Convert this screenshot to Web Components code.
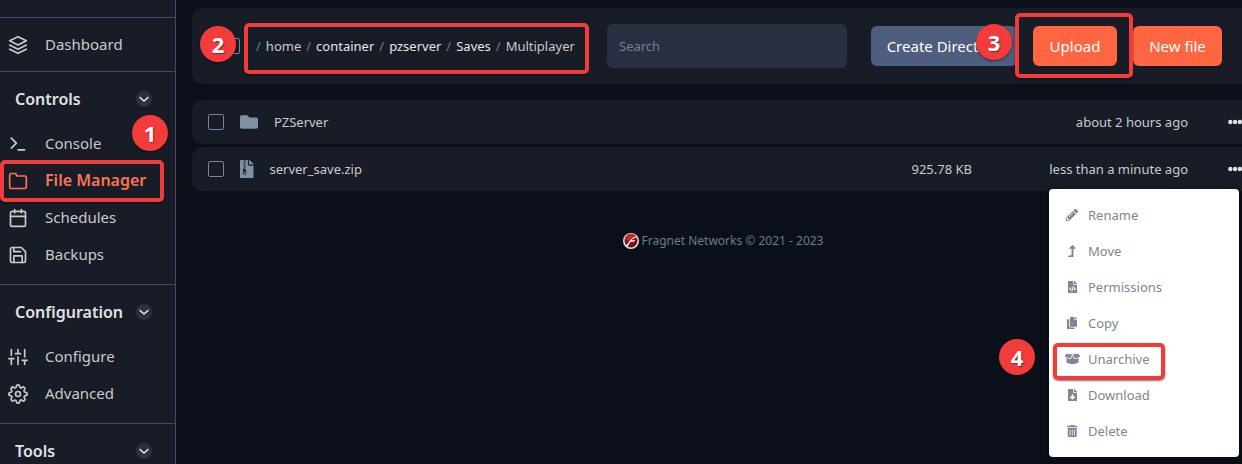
<!DOCTYPE html>
<html lang="en">
<head>
<meta charset="utf-8">
<meta name="viewport" content="width=device-width, initial-scale=1">
<title>File Manager</title>
<style>
  html { background: #0b0f19; }
  body {
    --panel: #171c27;
    --line: #4a4a68;
    --text: #cacaca;
    --muted: #7b8794;
    --orange: #fe6642;
    --mark: #f23b3b;
    margin: 0;
    background: #0b0f19;
    color: var(--text);
    font-family: "Noto Sans", "Open Sans", sans-serif;
    font-size: 13px;
    line-height: 20px;
  }
</style>
</head>
<body>
<app-shell>
  <side-nav slot="nav">
    <nav-section>
      <nav-item icon="layers">Dashboard</nav-item>
    </nav-section>
    <nav-section heading="Controls">
      <nav-item icon="terminal">Console</nav-item>
      <nav-item icon="folderLine" active>File Manager
        <call-out slot="mark" number="1" style="--box: -2px 11px -3px 0; --badge-x: 132px; --badge-y: -47px"></call-out>
      </nav-item>
      <nav-item icon="calendar">Schedules</nav-item>
      <nav-item icon="save">Backups</nav-item>
    </nav-section>
    <nav-section heading="Configuration">
      <nav-item icon="sliders">Configure</nav-item>
      <nav-item icon="settings">Advanced</nav-item>
    </nav-section>
    <nav-section heading="Tools"></nav-section>
  </side-nav>

  <file-toolbar></file-toolbar>
  <file-list>
    <file-row name="PZServer" icon="folder" date="about 2 hours ago"></file-row>
    <file-row name="server_save.zip" icon="archive" size="925.78 KB" date="less than a minute ago">
      <action-menu slot="menu">
        <menu-item icon="pencil">Rename</menu-item>
        <menu-item icon="levelUp">Move</menu-item>
        <menu-item icon="code">Permissions</menu-item>
        <menu-item icon="copy">Copy</menu-item>
        <menu-item icon="boxOpen">Unarchive
          <call-out slot="mark" number="4" style="--box: 2px 74px -3px 4px; --badge-x: -50px; --badge-y: -2px"></call-out>
        </menu-item>
        <menu-item icon="download">Download</menu-item>
        <menu-item icon="trash">Delete</menu-item>
      </action-menu>
    </file-row>
  </file-list>
  <page-footer>Fragnet Networks © 2021 - 2023</page-footer>
</app-shell>

<script>
const line = (body) => ({ box: "0 0 24 24", line: true, body });
const solid = (width, d) => ({ box: `0 0 ${width} 512`, body: `<path d="${d}"/>` });

const ICONS = {
  layers: line('<path d="M12 2 2 7l10 5 10-5-10-5z"/><path d="m2 17 10 5 10-5M2 12l10 5 10-5"/>'),
  terminal: line('<path d="m4 17 6-6-6-6M12 19h8"/>'),
  folderLine: line('<path d="M22 19a2 2 0 0 1-2 2H4a2 2 0 0 1-2-2V5a2 2 0 0 1 2-2h5l2 3h9a2 2 0 0 1 2 2z"/>'),
  calendar: line('<rect x="3" y="4" width="18" height="18" rx="2"/><path d="M16 2v4M8 2v4M3 10h18"/>'),
  save: line('<path d="M19 21H5a2 2 0 0 1-2-2V5a2 2 0 0 1 2-2h11l5 5v11a2 2 0 0 1-2 2z"/><path d="M17 21v-8H7v8M7 3v5h8"/>'),
  sliders: line('<path d="M4 21v-7M4 10V3M12 21v-9M12 8V3M20 21v-5M20 12V3M1 14h6M9 8h6M17 16h6"/>'),
  settings: line('<circle cx="12" cy="12" r="3"/><path d="M19.4 15a1.65 1.65 0 0 0 .33 1.82l.06.06a2 2 0 0 1-2.83 2.83l-.06-.06a1.65 1.65 0 0 0-2.8 1.18V21a2 2 0 0 1-4 0v-.09A1.65 1.65 0 0 0 9 19.4a1.65 1.65 0 0 0-1.82.33l-.06.06a2 2 0 0 1-2.83-2.83l.06-.06a1.65 1.65 0 0 0-1.18-2.8H3a2 2 0 0 1 0-4h.09A1.65 1.65 0 0 0 4.6 9a1.65 1.65 0 0 0-.33-1.82l-.06-.06a2 2 0 0 1 2.83-2.83l.06.06A1.65 1.65 0 0 0 9 4.6a1.65 1.65 0 0 0 1-1.51V3a2 2 0 0 1 4 0v.09a1.65 1.65 0 0 0 2.8 1.18l.06-.06a2 2 0 0 1 2.83 2.83l-.06.06A1.65 1.65 0 0 0 19.4 9c.26.6.85 1 1.51 1H21a2 2 0 0 1 0 4h-.09a1.65 1.65 0 0 0-1.51 1z"/>'),
  chevron: line('<path d="m4 9 8 7 8-7"/>'),
  folder: solid(512, "M464 128H272l-64-64H48C21.49 64 0 85.49 0 112v288c0 26.51 21.49 48 48 48h416c26.51 0 48-21.49 48-48V176c0-26.51-21.49-48-48-48z"),
  archive: solid(384, "M377 105L279.1 7c-4.5-4.5-10.6-7-17-7H256v128h128v-6.1c0-6.3-2.5-12.4-7-16.9zM128.4 336c-17.9 0-32.4 12.1-32.4 27 0 15 14.6 27 32.5 27s32.4-12.1 32.4-27-14.6-27-32.5-27zM224 136V0h-63.6v32h-32V0H24C10.7 0 0 10.7 0 24v464c0 13.3 10.7 24 24 24h336c13.3 0 24-10.7 24-24V160H248c-13.2 0-24-10.8-24-24zM95.9 32h32v32h-32zm32.3 384c-33.2 0-58-30.4-51.4-62.9L96.4 256v-32h32v-32h-32v-32h32v-32h-32V96h32V64h32v32h-32v32h32v32h-32v32h32v32h-32v32h22.1c5.7 0 10.7 4.1 11.8 9.7l17.3 87.7c6.4 32.4-18.4 62.6-51.4 62.6z"),
  dots: { box: "0 0 14 14", body: '<circle cx="2.3" cy="7" r="2.2"/><circle cx="7.1" cy="7" r="2.2"/><circle cx="11.9" cy="7" r="2.2"/>' },
  pencil: solid(512, "M497.9 142.1l-46.1 46.1c-4.7 4.7-12.3 4.7-17 0l-111-111c-4.7-4.7-4.7-12.3 0-17l46.1-46.1c18.7-18.7 49.1-18.7 67.9 0l60.1 60.1c18.8 18.7 18.8 49.1 0 67.9zM284.2 99.8L21.6 362.4.4 483.9c-2.9 16.4 11.4 30.6 27.8 27.8l121.5-21.3 262.6-262.6c4.7-4.7 4.7-12.3 0-17l-111-111c-4.8-4.7-12.4-4.7-17.1 0zM124.1 339.9c-5.5-5.5-5.5-14.3 0-19.8l154-154c5.5-5.5 14.3-5.5 19.8 0s5.5 14.3 0 19.8l-154 154c-5.5 5.5-14.3 5.5-19.8 0zM88 424h48v36.3l-64.5 11.3-31.1-31.1L51.7 376H88v48z"),
  levelUp: solid(320, "M313.553 119.669L209.587 7.666c-9.485-10.214-25.676-10.229-35.174 0L70.438 119.669C56.232 134.969 67.062 160 88.025 160H152v272H68.024a11.996 11.996 0 0 0-8.485 3.515l-56 56C-4.021 499.074 1.333 512 12.024 512H208c13.255 0 24-10.745 24-24V160h63.966c20.878 0 31.851-24.969 17.587-40.331z"),
  code: solid(384, "M384 121.941V128H256V0h6.059c6.365 0 12.47 2.529 16.971 7.029l97.941 97.941A24.005 24.005 0 0 1 384 121.941zM248 160c-13.2 0-24-10.8-24-24V0H24C10.745 0 0 10.745 0 24v464c0 13.255 10.745 24 24 24h336c13.255 0 24-10.745 24-24V160H248zM123.206 400.505a5.4 5.4 0 0 1-7.633.246l-64.866-60.812a5.4 5.4 0 0 1 0-7.879l64.866-60.812a5.4 5.4 0 0 1 7.633.246l19.579 20.885a5.4 5.4 0 0 1-.372 7.747L101.65 336l40.763 35.874a5.4 5.4 0 0 1 .372 7.747l-19.579 20.884zm51.295 50.479l-27.453-7.97a5.402 5.402 0 0 1-3.681-6.692l61.44-211.626a5.402 5.402 0 0 1 6.692-3.681l27.452 7.97a5.4 5.4 0 0 1 3.68 6.692l-61.44 211.626a5.397 5.397 0 0 1-6.69 3.681zm160.792-111.045l-64.866 60.812a5.4 5.4 0 0 1-7.633-.246l-19.58-20.885a5.4 5.4 0 0 1 .372-7.747L284.35 336l-40.763-35.874a5.4 5.4 0 0 1-.372-7.747l19.58-20.885a5.4 5.4 0 0 1 7.633-.246l64.866 60.812a5.4 5.4 0 0 1-.001 7.879z"),
  copy: solid(448, "M320 448v40c0 13.255-10.745 24-24 24H24c-13.255 0-24-10.745-24-24V120c0-13.255 10.745-24 24-24h72v296c0 30.879 25.121 56 56 56h168zm0-344V0H152c-13.255 0-24 10.745-24 24v368c0 13.255 10.745 24 24 24h272c13.255 0 24-10.745 24-24V128H344c-13.2 0-24-10.8-24-24zm120.971-31.029L375.029 7.029A24 24 0 0 0 358.059 0H352v96h96v-6.059a24 24 0 0 0-7.029-16.97z"),
  boxOpen: solid(640, "M425.7 256c-16.9 0-32.8-9-41.4-23.4L320 126l-64.2 106.6c-8.7 14.5-24.6 23.5-41.5 23.5-4.5 0-9-.6-13.3-1.9L64 215v178c0 14.7 10 27.5 24.2 31l216.2 54.1c10.2 2.5 20.9 2.5 31 0L551.8 424c14.2-3.6 24.2-16.4 24.2-31V215l-137 39.1c-4.3 1.3-8.8 1.9-13.3 1.9zm212.6-112.2L586.8 41c-3.1-6.2-9.8-9.8-16.7-8.9L320 64l91.7 152.1c3.8 6.3 11.4 9.3 18.5 7.3l197.9-56.5c9.9-2.9 14.7-13.9 10.2-23.1zM53.2 41L1.7 143.8c-4.6 9.2.3 20.2 10.1 23l197.9 56.5c7.1 2 14.7-1 18.5-7.3L320 64 69.8 32.1c-6.9-.8-13.5 2.7-16.6 8.9z"),
  download: solid(384, "M224 136V0H24C10.7 0 0 10.7 0 24v464c0 13.3 10.7 24 24 24h336c13.3 0 24-10.7 24-24V160H248c-13.2 0-24-10.8-24-24zm76.45 211.36l-96.42 95.7c-6.65 6.61-17.39 6.61-24.04 0l-96.42-95.7C73.42 337.29 80.54 320 94.82 320H160v-80c0-8.84 7.16-16 16-16h32c8.84 0 16 7.16 16 16v80h65.18c14.28 0 21.4 17.29 11.27 27.36zM377 105L279.1 7c-4.5-4.5-10.6-7-17-7H256v128h128v-6.1c0-6.3-2.5-12.4-7-16.9z"),
  trash: solid(448, "M32 464a48 48 0 0 0 48 48h288a48 48 0 0 0 48-48V128H32zm272-256a16 16 0 0 1 32 0v224a16 16 0 0 1-32 0zm-96 0a16 16 0 0 1 32 0v224a16 16 0 0 1-32 0zm-96 0a16 16 0 0 1 32 0v224a16 16 0 0 1-32 0zM432 32H312l-9.4-18.7A24 24 0 0 0 281.1 0H166.8a23.72 23.72 0 0 0-21.4 13.3L136 32H16A16 16 0 0 0 0 48v32a16 16 0 0 0 16 16h416a16 16 0 0 0 16-16V48a16 16 0 0 0-16-16z"),
  brand: { box: "0 0 16 16", body: '<circle cx="8" cy="8" r="8" fill="#d9dcdf"/><circle cx="8" cy="8" r="6.4" fill="#7d1014"/><path d="M2 6a6.2 6.2 0 0 1 12-1L4 8z" fill="#c9252a"/><path d="M3 12.6C6 10 7 4.6 13.8 3.2L12.6 5C10.2 5.4 9.3 6 8.5 7.2h3.800l-1.200 1.600H7.500C6.500 10.800 5.400 12.600 3.800 13.600z" fill="#fff"/>' }
};

/* Base class: fills an open shadow root from view() once attributes are available. */
class View extends HTMLElement {
  connectedCallback() {
    if (this.shadowRoot) return;
    this.attachShadow({ mode: "open" }).innerHTML =
      `<style>*{box-sizing:border-box}${this.css()}</style>${this.view()}`;
  }
  attr(name) { return this.getAttribute(name) || ""; }
}

class UiIcon extends View {
  css() { return `:host{display:inline-flex;flex:none;height:var(--icon-size,20px)}
    svg{display:block;height:100%;width:auto;fill:currentColor}
    svg.line{fill:none;stroke:currentColor;stroke-width:var(--icon-stroke,2);stroke-linecap:round;stroke-linejoin:round}`; }
  view() {
    const i = ICONS[this.attr("name")];
    return `<svg viewBox="${i.box}" class="${i.line ? "line" : ""}" aria-hidden="true">${i.body}</svg>`;
  }
}

class AppShell extends View {
  css() { return `:host{display:grid;grid-template-columns:176px minmax(0,1fr);grid-template-rows:minmax(0,1fr);height:100vh}
    main{padding:8px 0 0 16px;min-width:0}`; }
  view() { return `<slot name="nav"></slot><main><slot></slot></main>`; }
}

class SideNav extends View {
  css() { return `:host{display:block;background:var(--panel);border-right:1px solid var(--line);overflow-x:hidden;overflow-y:auto;scrollbar-width:none}
    nav{padding-top:17px}`; }
  view() { return `<nav aria-label="Server"><slot></slot></nav>`; }
}

class NavSection extends View {
  css() { return `:host{display:block;border-top:1px solid var(--line);padding:8px 0}
    :host([heading]){padding:0 0 11px}
    header{display:flex;align-items:center;justify-content:space-between;height:53px;padding:0 23px 0 15px}
    h2{margin:0;font-size:16px;line-height:24px;font-weight:600;color:#e2e2e2}
    button{display:flex;align-items:center;justify-content:center;width:16px;height:16px;padding:0;border:0;border-radius:50%;background:#2c3044;color:#eee;--icon-size:12px;--icon-stroke:3}`; }
  view() {
    const h = this.attr("heading");
    return (h ? `<header><h2>${h}</h2><button type="button" aria-label="Toggle ${h}"><ui-icon name="chevron"></ui-icon></button></header>` : "") + `<slot></slot>`;
  }
}

class NavItem extends View {
  css() { return `:host{display:block;position:relative}
    a{display:flex;align-items:center;gap:17px;height:37px;padding-left:8px;color:inherit;text-decoration:none;font-size:15px;line-height:25px}
    a span{padding-bottom:1px}
    :host([active]){color:#ff7350}
    :host([active]) a{font-size:16px;font-weight:600}`; }
  view() { return `<a href="#"><ui-icon name="${this.attr("icon")}"></ui-icon><span><slot></slot></span></a><slot name="mark"></slot>`; }
}

/* Numbered tutorial marker: a red frame around its parent plus a round badge. */
class CallOut extends View {
  css() { return `:host{position:absolute;inset:0;pointer-events:none;z-index:2}
    .frame{position:absolute;inset:var(--box);border:4px solid var(--mark);border-radius:5px;box-shadow:0 1px 2px #0008}
    .badge{position:absolute;left:var(--badge-x);top:var(--badge-y);width:36px;height:36px;border-radius:50%;background:var(--mark);color:#fff;
      font:700 22px/36px "Open Sans","Noto Sans",sans-serif;text-align:center;box-shadow:0 1px 2px #0008;text-shadow:1px 1px 1px #0006}`; }
  view() { return `<div class="frame"></div><div class="badge">${this.attr("number")}</div>`; }
}

const checkboxCss = `input[type=checkbox]{appearance:none;flex:none;width:16px;height:16px;margin:0;border:1px solid #76859a;border-radius:2px;background:transparent}`;

class FileToolbar extends View {
  css() { return `:host{display:flex;align-items:center;height:76px;padding:0 20px 0 32px;background:var(--panel);border-radius:10px 0 0 10px}
    ${checkboxCss}
    .path{position:relative;display:flex;gap:5px;flex:1;min-width:0;margin-left:16px;white-space:nowrap}
    .path a{color:#e6e6e6;text-decoration:none}
    .path i{font-style:normal;color:#6c7b8c}
    .search{flex:none;width:240px;height:44px;padding:0 12px;border:0;border-radius:6px;background:#2b2f42;color:var(--text);font:inherit}
    .search::placeholder{color:#738091;opacity:1}
    .actions{display:flex;gap:16px;margin-left:24px}
    .cell{position:relative;display:flex}
    button{height:40px;padding:0;border:0;border-radius:6px;background:var(--orange);color:#fff;font:inherit;font-size:15px;white-space:nowrap}
    .create{width:146px;background:#4f5d7e}.upload{width:84px}.new{width:89px}`; }
  view() { return `<input type="checkbox" aria-label="Select all files">
    <div class="path"><i>/</i><span>home</span><i>/</i><a href="#">container</a><i>/</i><a href="#">pzserver</a><i>/</i><a href="#">Saves</a><i>/</i><span>Multiplayer</span>
      <call-out number="2" style="--box:-13px 18px -18px -12px;--badge-x:-56px;--badge-y:-10px"></call-out></div>
    <input class="search" type="text" placeholder="Search" aria-label="Search">
    <div class="actions"><button class="create" type="button">Create Directory</button>
      <div class="cell"><button class="upload" type="button">Upload</button>
        <call-out number="3" style="--box:-13px -16px -12px -18px;--badge-x:-57px;--badge-y:-2px"></call-out></div>
      <button class="new" type="button">New file</button></div>`; }
}

class FileList extends View {
  css() { return `:host{display:flex;flex-direction:column;gap:3px;margin-top:16px}`; }
  view() { return `<slot></slot>`; }
}

class FileRow extends View {
  css() { return `:host{display:flex;align-items:center;position:relative;height:44px;padding-left:16px;background:var(--panel);border-radius:10px 0 0 10px}
    ${checkboxCss}
    .type{margin:0 16px;color:#8090a0;--icon-size:18px}
    a{flex:1;color:inherit;text-decoration:none}
    .date{width:216px;text-align:right}
    button{display:flex;margin-left:40px;padding:0;border:0;background:none;color:#e0e0e0;--icon-size:14px}`; }
  view() { return `<input type="checkbox" aria-label="Select ${this.attr("name")}">
    <ui-icon class="type" name="${this.attr("icon")}"></ui-icon>
    <a href="#">${this.attr("name")}</a><span>${this.attr("size")}</span><span class="date">${this.attr("date")}</span>
    <button type="button" aria-label="Actions for ${this.attr("name")}"><ui-icon name="dots"></ui-icon></button><slot name="menu"></slot>`; }
}

class ActionMenu extends View {
  css() { return `:host{display:block;position:absolute;top:42px;right:3px;width:190px;padding:8px 0;box-sizing:border-box;border-radius:4px;background:#fff;color:var(--muted);box-shadow:0 2px 8px #0006}`; }
  view() { return `<div role="menu"><slot></slot></div>`; }
}

class MenuItem extends View {
  css() { return `:host{display:block;position:relative}
    button{display:flex;align-items:center;gap:8px;width:100%;height:36px;padding:0 16px 0 15px;border:0;background:none;color:inherit;font:inherit;--icon-size:12px}
    .icon{display:flex;justify-content:center;width:16px}`; }
  view() { return `<button type="button" role="menuitem"><span class="icon"><ui-icon name="${this.attr("icon")}"></ui-icon></span><span><slot></slot></span></button><slot name="mark"></slot>`; }
}

class PageFooter extends View {
  css() { return `:host{display:flex;justify-content:center;align-items:center;gap:3px;margin-top:40px;padding-left:12px;font-size:12px;color:#6c7b8c;--icon-size:16px}`; }
  view() { return `<ui-icon name="brand"></ui-icon><span><slot></slot></span>`; }
}

customElements.define("ui-icon", UiIcon);
customElements.define("call-out", CallOut);
customElements.define("nav-item", NavItem);
customElements.define("nav-section", NavSection);
customElements.define("side-nav", SideNav);
customElements.define("file-toolbar", FileToolbar);
customElements.define("menu-item", MenuItem);
customElements.define("action-menu", ActionMenu);
customElements.define("file-row", FileRow);
customElements.define("file-list", FileList);
customElements.define("page-footer", PageFooter);
customElements.define("app-shell", AppShell);
</script>
</body>
</html>
